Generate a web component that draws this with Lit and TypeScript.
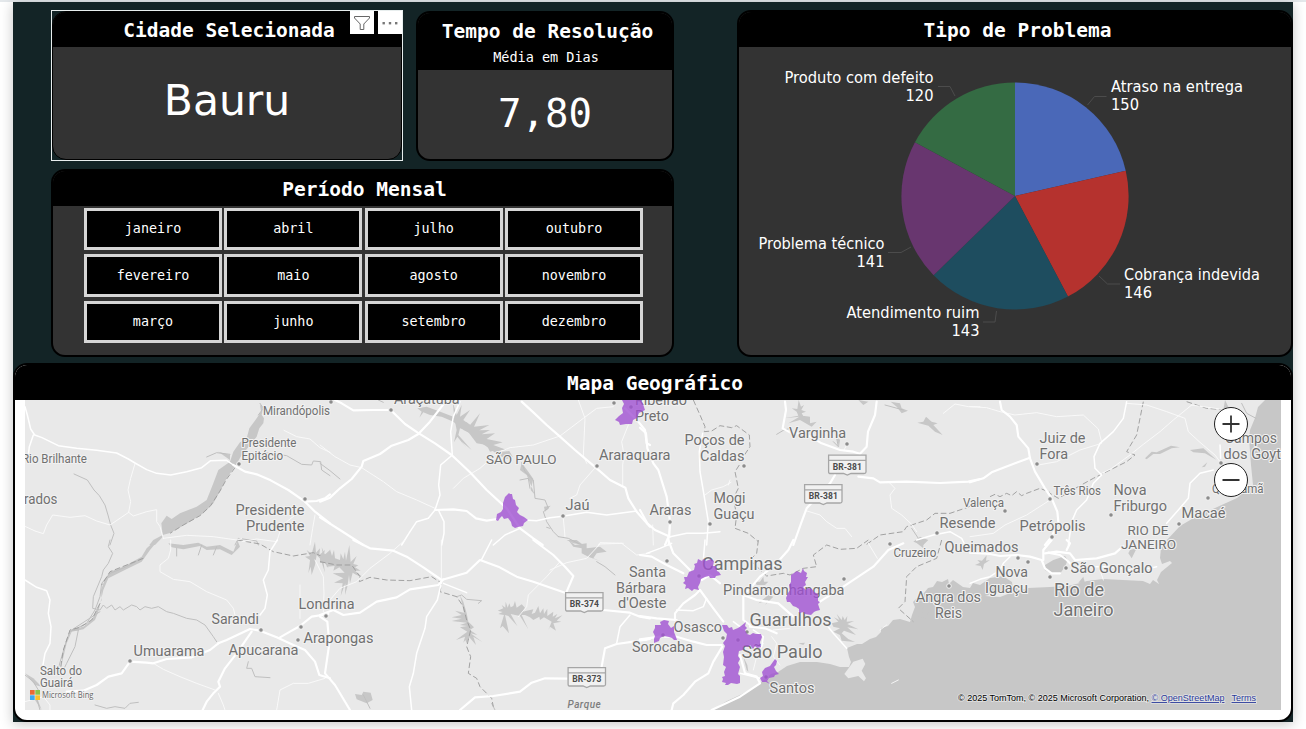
import { LitElement, html, css, svg } from "lit";
import { customElement } from "lit/decorators.js";

const MONTHS = [
  "janeiro", "fevereiro", "março", "abril", "maio", "junho",
  "julho", "agosto", "setembro", "outubro", "novembro", "dezembro",
];

interface Slice {
  name: string;
  value: number;
  color: string;
  x: number;
  y: number;
  width: number;
  end?: boolean;
  leader: string;
}

const SLICES: Slice[] = [
  { name: "Atraso na entrega", value: 150, color: "#4a68b8", x: 1111, y: 92, width: 132, leader: "1087.5,105 1094.5,96.5 1106.5,96.5" },
  { name: "Cobrança indevida", value: 146, color: "#b5322e", x: 1124, y: 280, width: 136, leader: "1099,276 1107.5,284 1120,284" },
  { name: "Atendimento ruim", value: 143, color: "#1e4d5f", x: 979.5, y: 318, width: 133, end: true, leader: "996.5,311 995,322 983,322" },
  { name: "Problema técnico", value: 141, color: "#68366f", x: 884.5, y: 249, width: 126, end: true, leader: "911,247 901,252.5 888,252.5" },
  { name: "Produto com defeito", value: 120, color: "#346b43", x: 933.5, y: 83, width: 149, end: true, leader: "955,96 950,86.5 938,86.5" },
];

/** One map sheet; its lines are stored in thirds of a pixel from its origin. */
interface Sheet {
  x: number;
  y: number;
  major?: string[];
  road?: string[];
  minor?: string[];
  river?: string[];
  state?: string[];
  water?: string[];
  land?: string[];
}

const SHEETS: Sheet[] = [
  {
    x: 0, y: 355,
    road: [
      "75,155 82,180 92,222 104,240 126,248 175,272 230,280 290,286 350,294 385,312 405,324 440,344 470,355 512,360 560,350 605,338 632,317 680,316 700,330",
      "100,240 88,275 85,300",
    ],
    major: ["700,330 735,350 770,358 812,376 865,405 915,440 945,470 990,505", "915,440 950,438 975,430 990,418"],
    minor: [
      "405,326 392,370 384,405 392,440 386,472 345,500 330,510 290,498 255,482 210,487 158,480 140,510 130,536 105,528 75,514",
      "386,472 400,483 440,470 470,464 470,500 480,515 490,550", "490,550 560,541 640,545 710,555 725,550", "725,560 770,552 830,560 840,530 860,500 905,465",
      "945,480 938,520 930,570", "852,226 890,245 930,252 960,278 990,292",
    ],
    river: ["222,357 262,375 282,405 298,422 315,450 324,480 332,510 342,535 330,570", "620,306 650,293 690,298", "795,293 860,302 905,328 935,330 940,318 962,320 965,345 990,362", "705,570 715,550 770,558 775,570", "780,145 790,160 775,180"],
    water: [
      "790,155 780,150 783,170 770,190 748,220 740,250 720,262 700,290 690,320 655,345 640,385 620,435 590,455 540,475 515,492 500,482 484,505 488,540 510,534 570,500 610,475 640,445 665,400 680,370 708,330 725,300 738,285 770,245 778,220 790,205 792,190 785,180",
      "488,540 460,555 448,570 465,570 488,546", "690,300 655,290 690,315",
    ],
    state: ["705,338 680,372 660,408 632,452 600,482 550,510 510,535"],
  },
  {
    x: 320, y: 355,
    major: ["45,135 65,145 100,166 160,165 212,165 255,207 292,232 345,265 395,300 450,352 500,405 560,460 600,520 640,550 668,570", "605,140 640,172 680,210 720,245 765,285 830,340 870,375 916,398 925,430 950,470 990,515", "0,440 30,428 60,400 95,372 125,335 130,318 180,297 215,272 265,255 295,237 330,200 380,135", "0,487 60,525 130,570", "345,465 400,463 440,468 468,490 500,497 532,492", "915,160 955,200 975,225 980,265 990,270"],
    road: ["420,140 400,185 392,230 397,300 362,330 356,390 360,420 345,465 325,490 290,500 270,530 245,570", "355,465 372,500 372,535 365,570", "600,520 555,540 520,570", "610,495 650,497 690,488 728,484 800,472 860,480 950,468"],
    minor: ["0,270 45,305 90,330 125,338 190,380 230,410 290,435 345,460", "400,400 430,370 480,340 505,318", "540,290 570,278 640,270 720,243 790,190 830,160 880,155", "775,135 795,190 790,300 800,325", "925,210 905,260 912,300 908,330 908,395", "750,430 770,420 780,390 830,333", "730,490 735,545", "835,570 840,563 910,565"],
    river: ["0,325 30,347 60,372", "175,135 190,142", "605,323 615,350 640,375 645,430 675,435 685,460 670,470 680,500 700,530 715,545", "630,400 625,370 600,375", "715,545 745,550 785,570", "690,520 680,517"],
    water: [
      "292,160 320,155 355,168 400,185 420,200 440,202 470,225 500,255 522,275 548,290 568,288 578,305 560,312 535,300 505,278 485,265 460,240 430,225 400,200 365,185 330,180 310,172 298,188 305,170",
      "403,190 398,140 410,180 425,150 420,185 450,165 430,195 450,210 480,175 462,215 508,210 478,226 510,225 485,238 525,235 500,252 548,262 520,270 560,285 530,285 510,290 500,270 470,265 440,225 420,220 415,240 455,285 425,260 440,280 412,245 402,262 410,225",
      "605,323 625,350 640,372 632,405 645,420 620,360 600,345", "740,555 770,555 790,570 760,565", "672,455 692,452 675,470",
    ],
  },
  {
    x: 640, y: 355,
    major: ["0,218 18,235 22,280 40,325 55,345 80,425 90,500 88,540 75,570", "0,465 22,505 45,525 90,545", "435,140 438,165 428,220 450,232 500,238 545,265 600,285 640,290 660,296 680,275 684,230 705,180 710,140", "585,360 570,385 500,460 485,500 460,570", "655,365 700,370 720,382 800,380 900,384 985,380 1020,372"],
    road: ["188,235 178,290 180,350 192,420 205,500 200,570", "90,500 85,570", "90,545 140,535 190,535 240,530", "830,555 880,540 930,530 965,550 975,570"],
    minor: ["195,420 215,405 250,395 273,382", "265,390 270,375", "498,467 540,480 560,500 590,520 615,520 635,545", "750,385 765,400 750,420 755,460 785,480 815,508 830,530", "910,175 945,147 985,155 1020,155", "40,570 38,510", "620,270 612,285"],
    state: ["160,135 180,180 195,215 193,230 215,228 240,212 275,218 290,212 328,240 330,275 310,305", "298,330 285,350 295,400 280,430 290,480 285,520 325,535 355,560", "680,568 720,540 790,530 800,515 860,495 885,475 930,475 980,458 1020,440"],
    river: ["410,238 430,226 450,220", "590,250 595,275 580,260", "815,520 835,550", "735,150 790,165"],
    water: [
      "455,160 472,162 476,135 483,155 492,150 484,165 498,170 485,175 490,183 472,180 510,185 510,205 530,200 515,215 480,195 445,205 478,185 432,190 475,182 470,170",
      "655,135 685,140 670,150", "752,140 780,145 785,160 804,167 785,175 770,155", "832,203 850,200 858,185 875,200 893,205 880,210 908,240 885,230 865,212", "820,560 840,545 865,555 850,570", "588,240 600,255 597,275",
    ],
  },
  {
    x: 970, y: 355,
    major: ["90,140 95,165 120,185 140,210 145,245 175,280 180,310 195,350 225,400 245,430 262,470 265,500 245,545 225,570", "0,382 40,370 65,352 100,338 180,308"],
    road: ["470,140 460,190 430,230 390,265 372,305 375,340 395,360 370,385 350,435 320,465 305,500 295,570", "730,345 690,355 660,385 655,430 625,465 590,505", "750,270 752,310"],
    minor: ["0,155 50,158 90,170 135,180 200,173 260,185 340,180 385,222 395,262", "205,330 260,320 330,285 395,265", "470,145 530,150 590,170 645,190 655,230 690,262 735,300 750,320", "665,150 610,195 570,230 520,268 480,300 425,340 390,358", "0,545 70,535 105,510 170,480 240,435", "665,150 770,165"],
    state: ["520,140 510,190 500,240 470,290 495,300 470,320 420,345 370,370 330,392 265,430 240,415", "60,425 75,418 90,425 110,415 125,422 140,410 155,422 170,415 210,400 240,412", "650,140 710,160 770,165"],
    water: [
      "525,310 545,290 560,292 603,272 630,277 605,280 570,297 550,297 530,313", "660,285 700,280 740,315 705,295 670,292", "695,337 712,322 705,335",
      "765,135 775,155 760,165",
    ],
    river: ["815,145 830,175 858,190"],
  },
  {
    x: 0, y: 540,
    major: ["655,310 680,300 750,267 780,272 830,292 880,315 915,330 945,365 958,405 990,415", "390,365 440,368 460,370 500,357 575,352 630,330 655,310", "755,275 710,340 675,385 655,425 660,440 640,460 620,485 608,510", "840,292 870,275 900,258 935,230 985,222", "390,365 365,400 325,410 290,435 250,452 200,455"],
    road: ["75,120 110,142 140,152 150,180 145,220 153,260 150,310 135,340 128,380", "832,0 810,35 805,90 790,120 802,165 795,205 780,225"],
    minor: ["512,0 512,30 505,55 480,75 480,95 520,118 570,125 620,155 680,180 700,205 705,225", "460,370 490,388 540,410 590,430 645,450", "655,460 670,495 675,510", "830,510 840,450 880,430 925,430 975,415", "900,135 900,235", "945,60 970,110 972,160 970,215", "75,485 130,470 150,495 150,510"],
    river: [
      "330,0 325,20 338,40 325,70 310,90 305,110 280,170 278,205 300,210 310,195 320,205 335,195 345,210 360,200 370,210 395,195 410,200 420,210 435,200 455,205 475,200 500,215 520,220 560,235 590,240 615,255 640,290 650,305",
      "235,270 215,270 300,215", "235,270 225,320 200,370 190,390 175,385 185,350 200,300 210,275 260,250 285,210 300,170 305,130 330,100 380,80 425,55", "745,365 740,385 755,385 765,410 810,413", "285,495 320,505 345,500 375,505 390,490 415,487", "75,405 100,425 115,450", "110,475 120,510", "530,25 530,48", "605,15 595,45", "650,20 640,45",
    ],
    water: [
      "468,0 440,25 425,50 370,80 330,95 312,125 303,150 305,180 290,210 275,240 250,260 215,268 200,300 188,345 180,400 188,360 200,310 215,275 250,268 285,240 295,215 310,150 325,115 370,92 425,65 450,30 475,0",
      "505,10 550,15 595,8 620,20 660,15 700,35 710,10 712,0 720,20 695,45 660,28 620,30 600,18 550,28 515,22",
      "920,30 935,42 945,5 948,38 960,25 958,45 975,30 970,48 990,30 990,65 978,55 985,85 970,62 975,98 962,58 950,45 945,75 935,105 932,80 925,100 930,60 915,50 930,48",
      "75,400 100,415 125,440 105,435", "110,470 125,510 105,480",
    ],
    state: ["300,190 275,240 240,262 210,270 190,330 180,395", "430,55 330,95 305,135", "712,0 780,12 820,35 880,48 940,38 990,60"],
  },
  {
    x: 320, y: 540,
    major: ["100,0 150,25 220,32 260,50 310,82 365,120 440,98 480,60 535,80 590,110 640,125 735,158", "640,0 700,45 735,80 760,108 740,155", "0,225 40,210 70,225 120,218 170,185 230,172 270,148 355,135 370,118", "850,210 930,218 960,230 990,235", "845,380 855,325 890,312 940,305 990,297", "0,230 22,245 28,310 15,400 45,435 90,510", "420,510 465,472 520,468 600,455 635,428 675,415 740,416"],
    road: ["365,125 352,180 320,230 315,265 290,340 280,400 268,440 275,510", "370,130 440,158", "515,0 485,58", "930,225 900,260 890,310"],
    minor: ["255,0 210,40 150,85 110,125 60,145 30,180", "364,0 364,115", "690,90 740,68 800,55 840,12 905,10 950,45 990,40", "720,65 680,110 625,165 620,200 595,230"],
    state: ["0,65 50,75 95,75 120,110 118,125 150,112 200,120 270,122 335,110 365,130 360,155 410,170 430,200 440,240 452,270 440,320 452,350 445,400 470,415 480,440 515,475 520,500"],
    river: ["410,170 425,165 440,178 485,182 475,190", "830,65 855,80 885,105", "515,490 525,510", "130,465 150,505"],
    water: [
      "0,48 8,40 5,22 14,42 28,48 30,28 36,48 42,30 45,55 60,60 62,40 70,58 75,35 78,62 88,15 92,66 110,48 100,72 115,76 105,82 122,92 105,92 128,112 108,104 98,98 90,130 87,105 82,140 75,165 76,130 62,168 68,130 42,128 70,115 38,100 74,98 58,82 40,92 44,78 20,80 22,70 0,68",
      "420,165 430,185 440,220 445,245 462,262 450,270 472,285 452,280 487,306 460,290 468,315 448,292 440,310 436,300 430,308 435,290 408,300 442,275 420,262 442,258 420,255 440,248 395,243 425,236 395,232 425,225 405,212 432,218",
      "533,212 550,205 545,195 556,203 557,185 563,203 568,190 572,202 580,198 585,183 590,203 605,193 615,203 610,215 620,212 640,208 635,222 645,218 655,198 660,220 670,205 672,222 682,206 682,228 700,215 698,230 712,222 705,235 727,226 710,242 724,245 700,250 708,272 690,260 685,270 695,245 672,232 660,240 658,230 640,240 630,232 615,225 605,225 625,268 600,228 572,222 592,258 565,228 555,225 567,280 548,258 540,265 552,225 535,222 548,216",
      "745,0 765,15 800,10 800,25 840,20 860,35 830,40 820,55 845,65 805,50 785,40 785,25 760,20",
      "105,462 125,465 130,455 152,458 158,480 140,490 110,478",
    ],
  },
  {
    x: 640, y: 540,
    major: ["0,45 35,50 80,75 130,100", "85,0 100,40 150,90", "460,0 445,30 405,75 360,110 335,140 310,165 310,240 330,255", "310,165 350,180 415,190 460,230", "0,298 60,290 110,290 160,305 200,315 245,315", "0,228 50,235 110,240", "180,150 220,205 250,245", "180,150 165,165 130,190 105,220 105,240", "185,120 210,105 240,130", "540,185 610,140 700,80 745,30 790,10", "247,320 220,365 205,400 165,425 130,465 100,490 95,510", "300,345 315,400 350,410 360,430 300,470 215,510", "330,260 375,265 410,280"],
    road: ["20,40 60,25 95,10", "195,0 190,60", "110,210 160,212 190,200 200,175", "280,245 320,275", "560,255 580,280 620,325", "340,270 370,290 365,320", "0,300 20,300", "300,400 360,415"],
    minor: ["395,290 410,310 400,350 420,375", "340,390 350,350 370,310", "685,10 712,55", "400,270 450,265", "720,270 740,255", "755,430 775,420"],
    state: ["355,0 350,40 330,60 380,108 430,100 450,105 490,85 530,80 520,45 560,15 600,28 650,25 685,0", "905,0 890,55 830,80 800,110 795,185 775,205 820,245"],
    water: [
      "345,125 360,125 370,110 372,125 385,125 375,135 350,135", "385,165 355,190 385,180 375,195 400,170",
      "575,250 595,245 582,232 598,240 590,222 605,240 608,228 614,240 622,228 620,245 642,243 622,252 655,268 622,262 648,285 612,272 605,280 628,300 604,288 645,306 605,302 600,285 580,275 600,265 580,260",
      "320,390 315,370 310,350 322,375 325,395", "475,310 495,308 490,315", "850,200 865,215 855,235 835,240", "825,5 850,0 850,25", "845,210 850,235 835,230",
    ],
    land: ["613,402 640,365 668,356 676,372 665,392 678,415 672,424 655,408 625,415"],
  },
  {
    x: 970, y: 540,
    major: ["0,38 60,42 90,48 140,45 180,50 215,60 225,85 245,100 270,100", "220,60 220,30 245,0", "225,40 260,35 300,40 315,60 380,55 435,40 460,18", "290,0 300,10 290,30", "235,38 270,45 290,60 305,75"],
    road: ["0,130 30,118 60,110 90,90 100,70 120,50", "310,90 330,80 420,80 480,90 540,85 560,80"],
    minor: ["400,120 390,90"],
    water: ["225,75 250,60 285,48 293,60 285,80 272,98 245,102 224,90", "15,75 30,68 22,60 36,62 50,46 48,62 60,60 42,72 38,90 32,78", "75,125 100,130 125,140 160,150 170,155 75,155 55,130", "475,40 480,30 500,25 485,55", "325,128 340,110 345,130"],
  },
];

const OCEAN =
  "712,710 727,701 740,695 755,687 764,680 771,674 778,672 787,666 800,662 817,662 830,664 840,667 849,667 851,662 849,657 847,648 857,644 862,644 870,639 876,637 881,632 881,628 888,626 893,620 900,619 910,622 912,615 915,607 913,602 918,597 924,593 928,588 933,587 937,581 942,582 948,579 949,584 953,580 963,587 970,588 973,583 980,585 990,578 1003,576 1012,582 1013,590 1000,592 985,596 1000,597 1013,592 1028,588 1050,587 1068,586 1080,583 1087,581 1103,579 1143,581 1150,584 1153,580 1159,584 1157,580 1161,572 1172,563 1170,561 1162,564 1160,558 1161,548 1166,541 1180,526 1197,516 1215,508 1237,498 1253,485 1251,465 1249,438 1250,430 1255,418 1258,407 1265,400 1281,400 1281,710";

const CITIES = [
  "622,400 624,404 622,408 623,413 619,416 615,420 619,422 620,425 626,424 632,424 633,420 637,418 639,413 645,410 643,404 641,400",
  "509,493 510,494 512,494 513,499 515,500 516,505 519,508 517,512 520,515 524,517 528,520 524,523 523,526 518,527 515,528 512,526 511,522 508,518 504,519 502,516 500,518 498,521 496,520 497,514 501,512 503,509 503,503 505,497",
  "698,559 702,561 703,559 706,561 711,559 714,561 713,566 716,566 717,571 719,572 721,575 716,576 715,578 710,578 709,576 705,577 701,579 700,583 698,587 699,590 694,589 692,591 688,588 685,589 686,585 683,583 685,581 684,577 687,577 689,572 694,570 695,566 694,564 697,563",
  "803,568 804,571 807,573 806,577 808,577 805,582 806,585 803,587 806,590 808,588 812,589 814,592 818,594 818,601 820,602 818,604 820,610 816,611 814,612 811,615 805,614 804,612 799,613 799,609 796,607 793,606 790,602 787,602 786,598 788,593 790,590 789,585 791,582 791,575 797,571 801,573",
  "660,622 664,620 669,621 668,624 671,628 674,626 674,632 676,637 677,640 674,640 672,638 669,637 664,636 660,638 659,641 654,643 654,639 655,636 653,632 655,628 655,625 661,625",
  "722,625 727,625 729,628 732,627 733,630 738,628 741,626 746,622 745,626 747,628 745,630 747,634 750,635 753,633 756,634 761,634 762,637 760,642 761,647 757,648 755,646 753,649 750,645 748,647 744,646 743,650 739,651 738,656 740,659 738,663 740,667 738,674 740,676 740,683 737,684 731,683 728,685 725,685 726,683 722,682 723,679 722,677 725,676 724,672 726,667 723,665 724,657 723,652 725,646 723,643 726,639 727,634 724,631",
  "775,659 777,661 776,665 774,667 776,671 779,674 775,675 774,677 769,678 767,681 770,684 766,682 762,682 760,678 763,676 762,672 765,668 770,666",
];

type Label = [string, number, number, number, number];
const LABELS: Label[] = [
  ["Mirandópolis", 263, 415, 12, 67], ["Araçatuba", 394, 404, 14, 65.5], ["Ribeirão", 635, 405, 14, 52], ["Preto", 635, 421, 14, 34],
  ["Presidente", 241.5, 447, 12, 55], ["Epitácio", 241.5, 459.5, 12, 41.5], ["Rio Brilhante", 22, 463, 12, 65], ["rados", 24, 504, 14, 33.5],
  ["Presidente", 235.5, 515, 14, 69], ["Prudente", 246, 531, 14, 58.5], ["SÃO PAULO", 486, 464, 12, 70.5], ["Araraquara", 599, 460, 14, 71.5],
  ["Jaú", 565.5, 510, 14, 24], ["Poços de", 684.5, 445, 14, 60], ["Caldas", 700, 461, 14, 44.5], ["Varginha", 789, 438, 14, 57],
  ["Mogi", 713.5, 503, 14, 32], ["Guaçu", 713.5, 519, 14, 41], ["Araras", 649.5, 515, 14, 42], ["Juiz de", 1039.5, 443, 14, 46],
  ["Fora", 1039.5, 459, 14, 28.5], ["Três Rios", 1053.5, 495, 12, 47.5], ["Nova", 1113.5, 495, 14, 33], ["Friburgo", 1113.5, 511, 14, 53.5],
  ["Valença", 963, 507, 12, 41], ["Resende", 939.5, 528, 14, 56], ["Petrópolis", 1019.5, 531, 14, 66], ["Macaé", 1181.5, 518, 14, 44],
  ["RIO DE", 1127.5, 535, 12, 41], ["JANEIRO", 1121, 549, 12, 55], ["Campos", 1225, 443, 14, 52], ["dos Goyt", 1223.5, 459, 14, 57.5],
  ["Quissamã", 1212, 493, 12, 51.5], ["Cruzeiro", 893.5, 557, 12, 43], ["Queimados", 944.5, 552, 14, 74], ["Nova", 995.5, 577, 14, 32.5],
  ["Iguaçu", 985, 593, 14, 43], ["São Gonçalo", 1070.5, 573, 14, 82], ["Rio de", 1054, 596, 18, 50], ["Janeiro", 1053.5, 616, 18, 60],
  ["Angra dos", 916, 602, 14, 65], ["Reis", 935, 618, 14, 27], ["Campinas", 702, 570, 18, 80.5], ["Pindamonhangaba", 723, 595, 14, 121.5],
  ["Guarulhos", 749.5, 626, 18, 82], ["São Paulo", 741.5, 658, 18, 81], ["Osasco", 673.5, 632, 14, 48.5], ["Sorocaba", 632, 652, 14, 61],
  ["Santos", 769.5, 693, 14, 45], ["Santa", 629, 577, 14, 37], ["Bárbara", 616, 593, 14, 50], ["d'Oeste", 618, 608, 14, 48.5],
  ["Londrina", 298.5, 609, 14, 56], ["Sarandi", 211.5, 624, 14, 47.5], ["Arapongas", 303.5, 643, 14, 70], ["Apucarana", 228.5, 655, 14, 70],
  ["Umuarama", 133.5, 656, 14, 71], ["Salto do", 40, 675, 12, 42], ["Guairá", 40, 687, 12, 33],
];

const DOTS: [number, number][] = [
  [239, 464], [305, 499], [391, 410], [331, 402], [597, 466], [563, 516], [614, 403], [631, 407], [744, 466], [670, 522], [710, 524],
  [847, 444], [1037, 464], [1050, 499], [1005, 511], [1111, 515], [1179, 524], [1221, 463], [1208, 498], [1052, 537], [890, 544],
  [937, 533], [844, 579], [667, 561], [699, 576], [949, 586], [1018, 558], [1028, 562], [1050, 577], [1066, 568], [723, 638],
  [747, 632], [738, 640], [663, 635], [766, 677], [261, 630], [301, 627], [298, 640], [326, 616], [130, 661],
];

const SHIELDS: [string, number, number][] = [["BR-381", 828, 454.5], ["BR-381", 804, 484], ["BR-374", 565, 592], ["BR-373", 567.5, 667]];

const lines = (cls: string, items: string[] = []) => items.map((p) => svg`<polyline class=${cls} points=${p} />`);
const areas = (cls: string, items: string[] = []) => items.map((p) => svg`<polygon class=${cls} points=${p} />`);
const place = (s: Sheet) => `translate(${s.x} ${s.y}) scale(0.33333)`;

@customElement("problem-pie")
export class ProblemPie extends LitElement {
  static styles = css`
    :host { display: block; }
    svg { display: block; width: 552px; height: 308px; }
    .leader { fill: none; stroke: #4c4c4c; stroke-width: 1; }
    text { fill: #fff; font: 15.3px "DejaVu Sans Condensed", "DejaVu Sans", sans-serif; font-stretch: condensed; }
    .end { text-anchor: end; }
  `;

  render() {
    const cx = 1015, cy = 196, r = 113.6;
    const total = SLICES.reduce((sum, s) => sum + s.value, 0);
    let start = 0;
    return html`<svg viewBox="739 47 552 308" role="img">
      ${SLICES.map((s) => {
        const from = start;
        const to = (start += (s.value / total) * Math.PI * 2);
        const at = (a: number) => `${cx + r * Math.sin(a)} ${cy - r * Math.cos(a)}`;
        return svg`
          <path fill=${s.color} d="M${cx} ${cy}L${at(from)}A${r} ${r} 0 0 1 ${at(to)}Z" />
          <polyline class="leader" points=${s.leader} />
          <text class=${s.end ? "end" : ""} x=${s.x} y=${s.y} textLength=${s.width} lengthAdjust="spacingAndGlyphs">${s.name}</text>
          <text class=${s.end ? "end" : ""} x=${s.x} y=${s.y + 18} textLength="28" lengthAdjust="spacingAndGlyphs">${s.value}</text>`;
      })}
    </svg>`;
  }
}

@customElement("geo-map")
export class GeoMap extends LitElement {
  static styles = css`
    :host { display: block; position: relative; width: 1256px; height: 310px; background: #e9e9e9; }
    .canvas { display: block; width: 1256px; height: 310px; overflow: hidden; }
    .ocean, .water { fill: #c7c7c7; }
    .land { fill: #e9e9e9; }
    polyline { fill: none; stroke-linejoin: round; stroke-linecap: round; }
    .major { stroke: #fff; stroke-width: 6.5; }
    .road { stroke: #fff; stroke-width: 4.5; }
    .minor { stroke: #fafafa; stroke-width: 2.7; }
    .river { stroke: #bfbfbf; stroke-width: 3; }
    .state { stroke: #9c9c9c; stroke-width: 2.8; stroke-dasharray: 17 8; stroke-linecap: butt; }
    .city { fill: #9f4ed2; fill-opacity: 0.78; }
    .dot { fill: #8c8c8c; stroke: #f4f4f4; stroke-width: 1; }
    .label { fill: #707070; stroke: #f1f1f1; stroke-width: 2.2; paint-order: stroke; stroke-linejoin: round; font-family: Roboto, sans-serif; }
    .plate { fill: #f1f1f1; stroke: #a6a6a6; stroke-width: 1.3; }
    .code { font: bold 9.5px Roboto, sans-serif; fill: #4b4b4b; }
    .park { font: italic 500 10px Roboto, sans-serif; fill: #7d7d7d; letter-spacing: 0.5px; }
    .bing { font: 500 8.5px "Open Sans", sans-serif; fill: #666; stroke: #f4f4f4; stroke-width: 1.5; paint-order: stroke; }
    .credit { font: 9px "Liberation Sans", sans-serif; fill: #000; stroke: #e4e4e4; stroke-width: 1.6; paint-order: stroke; }
    .link { fill: #2a3a9a; text-decoration: underline; }
    .zoom { position: absolute; right: 33px; top: 7px; display: grid; gap: 22px; }
    .zoom button { width: 34px; height: 34px; padding: 0; border: 1.3px solid #222; border-radius: 50%; background: #fff; display: grid; place-items: center; }
    .zoom svg { width: 18px; height: 18px; stroke: #333; stroke-width: 1.8; }
  `;

  render() {
    return html`
      <svg class="canvas" viewBox="25 400 1256 310">
        ${areas("ocean", [OCEAN])}
        ${SHEETS.map((s) => svg`<g transform=${place(s)}>${areas("water", s.water)}${areas("land", s.land)}${lines("river", s.river)}${lines("state", s.state)}</g>`)}
        ${SHEETS.map((s) => svg`<g transform=${place(s)}>${lines("minor", s.minor)}${lines("road", s.road)}${lines("major", s.major)}</g>`)}
        ${DOTS.map(([x, y]) => svg`<circle class="dot" cx=${x} cy=${y} r="2.3" />`)}
        ${LABELS.map(([t, x, y, size, w]) => svg`<text class="label" x=${x} y=${y} font-size=${size} textLength=${w} lengthAdjust="spacingAndGlyphs">${t}</text>`)}
        ${areas("city", CITIES)}
        ${SHIELDS.map(([code, x, y]) => svg`<g transform="translate(${x} ${y})">
          <path class="plate" d="M0.6 0.6H38V17.5Q38 19 36 19H23L19.3 20.6 15.5 19H2.6Q0.6 19 0.6 17.5ZM0.6 5.8H38" />
          <text class="code" x="4.8" y="15" textLength="29" lengthAdjust="spacingAndGlyphs">${code}</text></g>`)}
        <text class="park" x="567.5" y="708">Parque</text>
        <rect x="30" y="690" width="4.7" height="4.7" fill="#ea6a35" />
        <rect x="35.3" y="690" width="4.7" height="4.7" fill="#8bc34a" />
        <rect x="30" y="695.3" width="4.7" height="4.7" fill="#3fa9f0" />
        <rect x="35.3" y="695.3" width="4.7" height="4.7" fill="#f9c22e" />
        <text class="bing" x="42" y="698.3" textLength="51.5" lengthAdjust="spacingAndGlyphs">Microsoft Bing</text>
        <text class="credit" x="958" y="701" textLength="191" lengthAdjust="spacingAndGlyphs">© 2025 TomTom, © 2025 Microsoft Corporation,</text>
        <text class="credit link" x="1151.5" y="701" textLength="73" lengthAdjust="spacingAndGlyphs">© OpenStreetMap</text>
        <text class="credit link" x="1231.5" y="701" textLength="24.5" lengthAdjust="spacingAndGlyphs">Terms</text>
      </svg>
      <div class="zoom">
        <button aria-label="+"><svg viewBox="0 0 18 18"><path d="M0.5 9H17.5M9 0.5V17.5" /></svg></button>
        <button aria-label="-"><svg viewBox="0 0 18 18"><path d="M0.5 9H17.5" /></svg></button>
      </div>`;
  }
}

@customElement("app-root")
export class AppRoot extends LitElement {
  static styles = css`
    :host { display: block; box-sizing: border-box; width: 1306px; height: 729px; padding: 2px 13px 7px; background: linear-gradient(#e4e8eb 2px, #fff 2px); overflow: hidden; }
    * { box-sizing: border-box; }
    .board { width: 1280px; height: 720px; padding-top: 8px; background: #132426; box-shadow: 0 2px 12px rgba(0, 0, 0, 0.24); display: flex; flex-direction: column; gap: 6px; }
    .top { display: flex; justify-content: space-between; height: 347px; padding-left: 38px; }
    .left { width: 623px; display: flex; flex-direction: column; justify-content: space-between; }
    .pair { display: flex; gap: 13px; align-items: flex-end; height: 151px; }
    .card { border: 2px solid #000; border-radius: 14px; background: #333; overflow: hidden; display: flex; flex-direction: column; color: #fff; }
    .head { background: #000; text-align: center; flex: none; font: bold 19.5px/20px "DejaVu Sans Mono", monospace; white-space: nowrap; }
    .selected { position: relative; width: 352px; height: 151px; border: 1px solid #e8eeee; }
    .city { height: 149px; border-width: 1px; }
    .city .head { height: 35px; padding: 9px 0 0 4px; }
    .tools { position: absolute; right: 0; top: 0; display: flex; gap: 4px; }
    .tool { display: block; width: 24px; height: 23px; background: #fff; }
    .value { flex: 1; display: grid; place-items: center; font-family: "DejaVu Sans", sans-serif; font-size: 42.5px; }
    .city .value { padding-bottom: 6px; }
    .time { width: 258px; height: 150px; }
    .time .head { height: 57px; padding: 9px 0 0 5px; }
    .sub { display: block; font-size: 13.5px; font-weight: normal; line-height: 16px; margin-top: 7px; margin-left: -3px; }
    .time .value { font-family: "DejaVu Sans Mono", monospace; font-size: 39px; padding-bottom: 2px; }
    .period { height: 188px; }
    .period .head { height: 35px; padding: 9px 0 0 4px; }
    .months { display: grid; grid-auto-flow: column; grid-template-rows: 42px 43px 42px; grid-auto-columns: 1fr; gap: 4px 2.3px; width: 559px; margin: 2px 0 0 31px; }
    .month { border: 3px solid #d6d6d6; background: #000; color: #fff; padding: 0 0 1px; font: 13.4px "DejaVu Sans Mono", monospace; }
    .kind { width: 556px; height: 347px; }
    .kind .head { height: 35px; padding: 9px 0 0 5px; }
    .map { height: 359px; background: #fff; }
    .map .head { height: 35px; padding: 9px 0 0 4px; }
    geo-map { margin-left: 10px; flex: none; }
    problem-pie { flex: none; }
  `;

  render() {
    return html`<div class="board">
      <div class="top">
        <div class="left">
          <div class="pair">
            <div class="selected">
              <section class="card city"><div class="head">Cidade Selecionada</div><div class="value">Bauru</div></section>
              <div class="tools">
                <svg class="tool" viewBox="0 0 24 23"><path d="M4.5 5.5H19.5V7L13.8 13V18.5H10.2V13L4.5 7Z" fill="none" stroke="#666" stroke-width="1" /></svg>
                <svg class="tool" viewBox="0 0 24 23"><g fill="#777"><rect x="4.5" y="11" width="2.4" height="2.4" /><rect x="10.8" y="11" width="2.4" height="2.4" /><rect x="17" y="11" width="2.4" height="2.4" /></g></svg>
              </div>
            </div>
            <section class="card time"><div class="head">Tempo de Resolução<span class="sub">Média em Dias</span></div><div class="value">7,80</div></section>
          </div>
          <section class="card period">
            <div class="head">Período Mensal</div>
            <div class="months">${MONTHS.map((m) => html`<button class="month">${m}</button>`)}</div>
          </section>
        </div>
        <section class="card kind"><div class="head">Tipo de Problema</div><problem-pie></problem-pie></section>
      </div>
      <section class="card map"><div class="head">Mapa Geográfico</div><geo-map></geo-map></section>
    </div>`;
  }
}
